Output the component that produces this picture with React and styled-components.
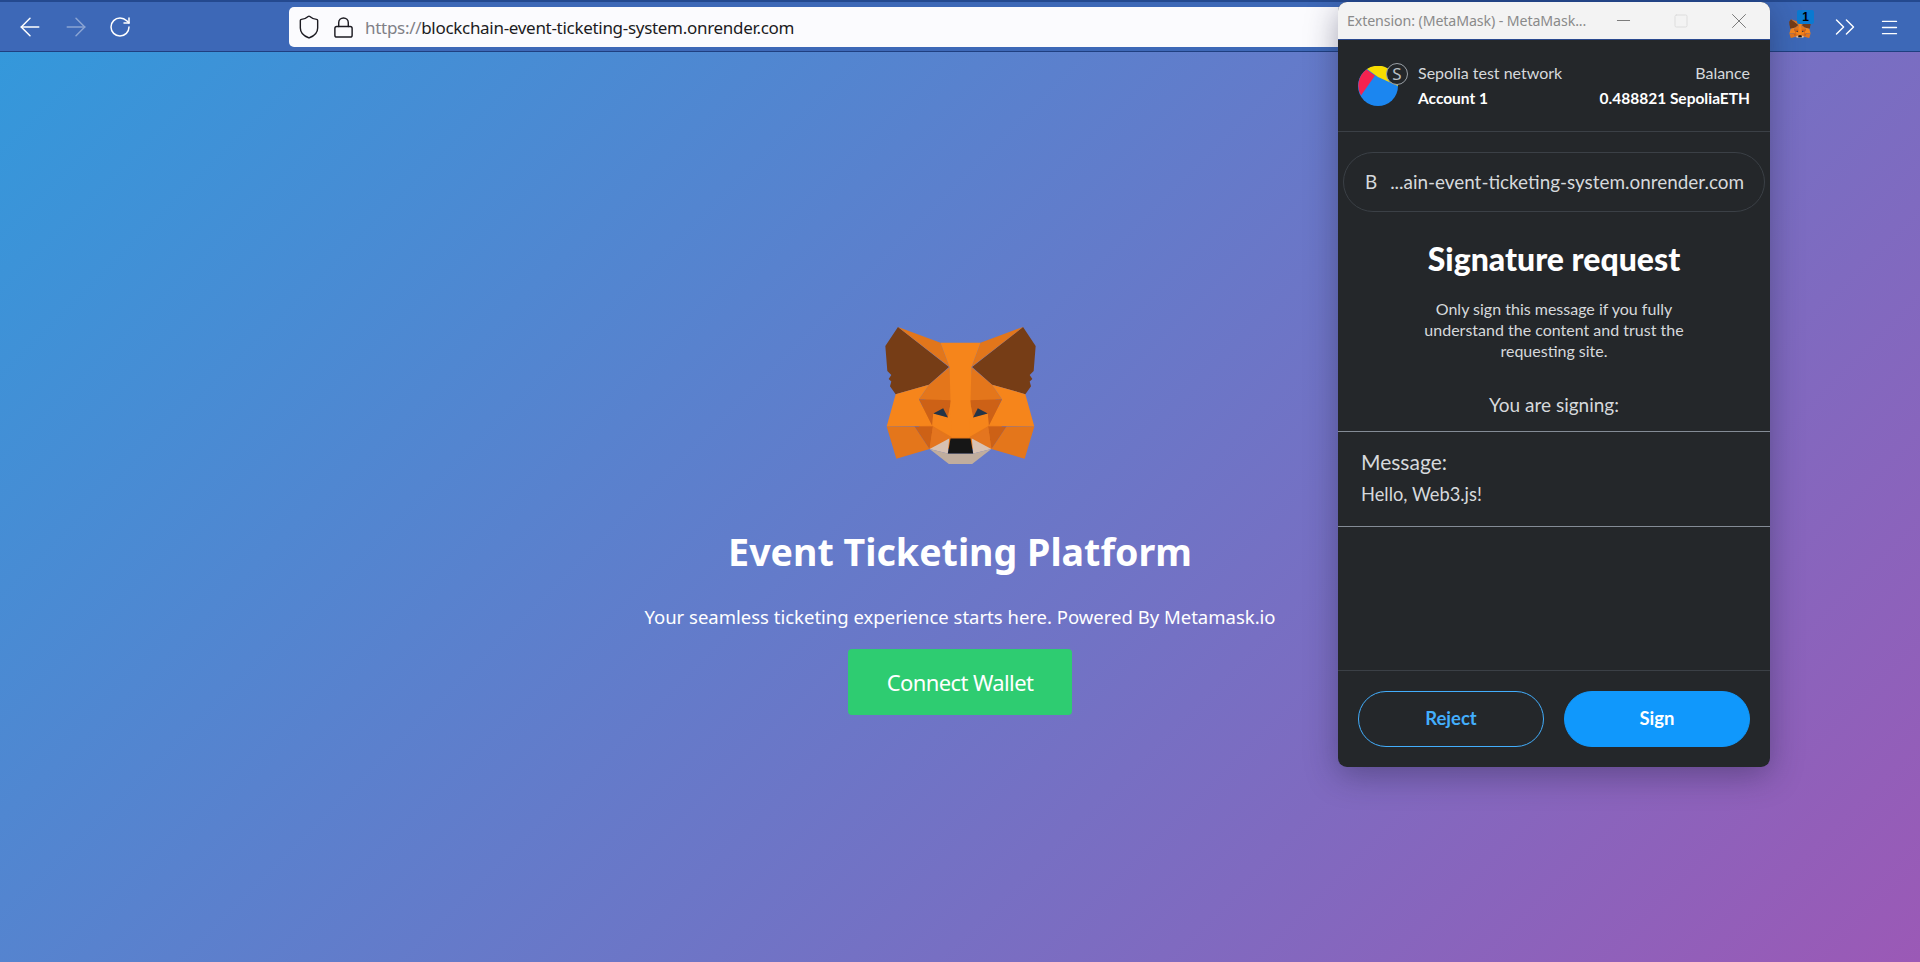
import React from 'react';
import styled, { createGlobalStyle } from 'styled-components';
import { ArrowLeft, ArrowRight, RotateCw, Shield, Lock, ChevronsRight, Menu, Minus, Square, X } from 'lucide-react';

const GlobalStyle = createGlobalStyle`
  html, body { margin: 0; padding: 0; height: 100%; overflow: hidden; }
  #root { height: 100%; }
  * { box-sizing: border-box; }
`;

const Page = styled.div`
  position: relative;
  display: flex;
  flex-direction: column;
  height: 962px;
  font-family: "Noto Sans", "Open Sans", sans-serif;
`;

const Toolbar = styled.header`
  display: flex;
  align-items: center;
  height: 52px;
  flex: none;
  padding: 1px 0 0 15px;
  background: #3d68b7;
  border-top: 2px solid #24498f;
  border-bottom: 1px solid #1f3f80;
  color: #fff;
`;

const NavButton = styled.span`
  display: flex;
  justify-content: center;
  width: 30px;
  margin-right: ${p => p.$gap}px;
  opacity: ${p => (p.$faded ? 0.4 : 1)};
`;

const AddressBar = styled.div`
  display: flex;
  align-items: center;
  flex: 1;
  height: 40px;
  margin-right: 100px;
  padding-left: 7px;
  gap: 10px;
  background: #fbfbfe;
  border-radius: 5px;
  color: #1c1b22;
`;

const Url = styled.span`
  font-size: 17px;
  letter-spacing: -0.3px;
  white-space: nowrap;
`;

const UrlScheme = styled.span`
  color: #808087;
`;

const ExtensionIcon = styled.span`
  position: relative;
  display: flex;
  width: 22px;
  margin: 3px 17px 0 0;
`;

const Badge = styled.span`
  position: absolute;
  top: -9px;
  left: 8px;
  width: 17px;
  height: 14px;
  border-radius: 2px;
  background: #0a7ad1;
  color: #000;
  font: 700 12px/14px "Liberation Sans", sans-serif;
  text-align: center;
`;

const ToolIcon = styled.span`
  display: flex;
  margin-right: ${p => p.$gap}px;
`;

const Main = styled.main`
  flex: 1;
  display: flex;
  flex-direction: column;
  align-items: center;
  padding-top: 274px;
  background: linear-gradient(135deg, #3498db, #9b59b6);
  color: #fff;
`;

const Title = styled.h1`
  margin: 61px 0 0;
  font-size: 37.6px;
  line-height: 52px;
  font-weight: 700;
`;

const Tagline = styled.p`
  margin: 26px 0 0;
  font-size: 18.5px;
  line-height: 26px;
`;

const ConnectButton = styled.button`
  width: 224px;
  height: 66px;
  margin-top: 19px;
  border: 0;
  border-radius: 4px;
  background: #2ecc71;
  color: #fff;
  font-family: inherit;
  font-size: 22px;
  letter-spacing: -0.6px;
`;

const Popup = styled.section`
  position: absolute;
  top: 2px;
  left: 1338px;
  display: flex;
  flex-direction: column;
  width: 432px;
  height: 765px;
  border-radius: 9px;
  overflow: hidden;
  background: #24272a;
  color: #d6d9dc;
  font-family: Lato, "Noto Sans", sans-serif;
  box-shadow: 0 8px 32px rgba(30, 30, 60, 0.4);
`;

const TitleBar = styled.div`
  display: flex;
  align-items: center;
  flex: none;
  height: 38px;
  padding-left: 9px;
  background: #f3f3f3;
  border-bottom: 1px solid #2b4a8f;
  color: #8a8a8a;
  font-family: "Noto Sans", sans-serif;
  font-size: 14.2px;
`;

const TitleText = styled.span`
  width: 247px;
  letter-spacing: -0.1px;
  white-space: nowrap;
`;

const WinControl = styled.span`
  display: flex;
  justify-content: center;
  width: 58px;
  color: ${p => p.$color};
`;

const AccountRow = styled.div`
  display: flex;
  align-items: center;
  flex: none;
  height: 92px;
  padding: 0 20px;
  border-bottom: 1px solid #3b4046;
  font-size: 16px;
`;

const AvatarWrap = styled.div`
  position: relative;
  width: 40px;
  height: 40px;
  margin-right: 20px;
`;

const NetworkBadge = styled.span`
  position: absolute;
  top: -3px;
  left: 28px;
  width: 22px;
  height: 22px;
  border: 1px solid #9aa0a6;
  border-radius: 50%;
  background: #24272a;
  color: #bbc0c5;
  font: 400 17px/20px "Noto Sans", sans-serif;
  text-align: center;
`;

const AccountCol = styled.div`
  display: flex;
  flex-direction: column;
  gap: 7px;
  line-height: 19px;
  margin-top: -1px;
  margin-left: ${p => (p.$right ? 'auto' : 0)};
  text-align: ${p => (p.$right ? 'right' : 'left')};
`;

const Strong = styled.span`
  color: #fff;
  font-size: 15.5px;
  font-weight: 700;
`;

const OriginPill = styled.div`
  display: flex;
  align-items: center;
  flex: none;
  height: 60px;
  margin: 20px 5px 0;
  padding: 0 20px 2px 21px;
  border: 1px solid #3b4046;
  border-radius: 30px;
  font-size: 18.9px;
  white-space: nowrap;
`;

const OriginText = styled.span`
  margin-left: auto;
`;

const Heading = styled.h2`
  margin: 27px 0 0;
  color: #fff;
  font-size: 32px;
  line-height: 40px;
  font-weight: 900;
  text-align: center;
`;

const Description = styled.p`
  margin: 19px auto 0;
  width: 280px;
  font-size: 16px;
  line-height: 21px;
  text-align: center;
`;

const SigningLabel = styled.div`
  flex: none;
  height: 38px;
  margin-top: 32px;
  font-size: 19px;
  line-height: 24px;
  text-align: center;
`;

const MessageBox = styled.div`
  flex: none;
  height: 96px;
  padding: 16px 23px 0;
  border-top: 1px solid #848c96;
  border-bottom: 1px solid #848c96;
`;

const MessageLabel = styled.div`
  font-size: 21px;
  line-height: 28px;
`;

const MessageBody = styled.div`
  margin-top: 4px;
  font-size: 18.3px;
  line-height: 28px;
`;

const Footer = styled.div`
  display: flex;
  gap: 20px;
  flex: none;
  margin-top: auto;
  height: 97px;
  padding: 20px 20px 0;
  border-top: 1px solid #3b4046;
`;

const PillButton = styled.button`
  flex: 1;
  height: 56px;
  padding-bottom: 3px;
  border: 1px solid ${p => (p.$primary ? '#1098fc' : '#43aefc')};
  border-radius: 28px;
  background: ${p => (p.$primary ? '#1098fc' : 'transparent')};
  color: ${p => (p.$primary ? '#fff' : '#43aefc')};
  font-family: inherit;
  font-size: 18.5px;
  font-weight: 700;
`;

const half = [
  ['#763d16', '112,48 74,105 80,180 92,192 84,204 92,212 88,226 105,250 205,222 265,168'],
  ['#e2761b', '112,48 240,95 267,168'],
  ['#e4761b', '267,168 205,222 175,265 272,268'],
  ['#f6851b', '105,250 205,222 175,265 215,345 78,347'],
  ['#cd6116', '175,265 272,268 262,320 218,308 215,345'],
  ['#f6851b', '215,345 218,308 262,320 272,268 276,380'],
  ['#233447', '218,308 248,292 262,320'],
  ['#e4761b', '78,347 162,347 207,415 107,444'],
  ['#cd6116', '162,347 217,347 207,415'],
  ['#e4751f', '217,347 266,383 207,415'],
  ['#d7c1b3', '207,415 266,383 262,428'],
];

const Fox = ({ width }) => (
  <svg width={width} viewBox="70 45 460 418" aria-hidden="true">
    <polygon fill="#e4761b" points="205,222 395,222 425,345 393,415 207,415 175,345" />
    <g>{half.map(([fill, pts]) => <polygon key={pts} fill={fill} points={pts} />)}</g>
    <g transform="translate(600 0) scale(-1 1)">
      {half.map(([fill, pts]) => <polygon key={pts} fill={fill} points={pts} />)}
    </g>
    <polygon fill="#f6851b" points="240,95 360,95 333,168 327,380 273,380 267,168" />
    <polygon fill="#c0ad9e" points="207,415 262,428 338,428 393,415 335,460 265,460" />
    <polygon fill="#161616" points="270,383 330,383 338,428 262,428" />
  </svg>
);

const Avatar = () => (
  <svg width="40" height="40" viewBox="0 0 40 40" aria-hidden="true">
    <circle cx="20" cy="20" r="20" fill="#1b86f0" />
    <path d="M9 3 A20 20 0 0 1 38.8 13 L40 20 L20 11 Z" fill="#f8dc00" />
    <path d="M8.5 3.6 L17 9.6 L3 29.5 A20 20 0 0 1 8.5 3.6 Z" fill="#f5224f" />
  </svg>
);

const App = () => (
  <Page>
    <GlobalStyle />
    <Toolbar>
      <NavButton $gap={16}><ArrowLeft size={30} strokeWidth={1.2} /></NavButton>
      <NavButton $gap={14} $faded><ArrowRight size={30} strokeWidth={1.2} /></NavButton>
      <NavButton $gap={154}><RotateCw size={24} strokeWidth={1.5} /></NavButton>
      <AddressBar>
        <Shield size={26} strokeWidth={1.3} />
        <Lock size={23} strokeWidth={1.5} />
        <Url><UrlScheme>https://</UrlScheme>blockchain-event-ticketing-system.onrender.com</Url>
      </AddressBar>
      <ExtensionIcon>
        <Fox width={22} />
        <Badge>1</Badge>
      </ExtensionIcon>
      <ToolIcon $gap={17}><ChevronsRight size={34} strokeWidth={1} /></ToolIcon>
      <ToolIcon $gap={20}><Menu size={21} strokeWidth={1.5} /></ToolIcon>
    </Toolbar>
    <Main>
      <Fox width={153} />
      <Title>Event Ticketing Platform</Title>
      <Tagline>Your seamless ticketing experience starts here. Powered By Metamask.io</Tagline>
      <ConnectButton>Connect Wallet</ConnectButton>
    </Main>
    <Popup>
      <TitleBar>
        <TitleText>Extension: (MetaMask) - MetaMask...</TitleText>
        <WinControl $color="#777"><Minus size={21} strokeWidth={1.1} /></WinControl>
        <WinControl $color="#ddd"><Square size={16} strokeWidth={1.5} /></WinControl>
        <WinControl $color="#777"><X size={26} strokeWidth={0.9} /></WinControl>
      </TitleBar>
      <AccountRow>
        <AvatarWrap>
          <Avatar />
          <NetworkBadge>S</NetworkBadge>
        </AvatarWrap>
        <AccountCol>
          <span>Sepolia test network</span>
          <Strong>Account 1</Strong>
        </AccountCol>
        <AccountCol $right>
          <span>Balance</span>
          <Strong>0.488821 SepoliaETH</Strong>
        </AccountCol>
      </AccountRow>
      <OriginPill>
        <span>B</span>
        <OriginText>...ain-event-ticketing-system.onrender.com</OriginText>
      </OriginPill>
      <Heading>Signature request</Heading>
      <Description>Only sign this message if you fully understand the content and trust the requesting site.</Description>
      <SigningLabel>You are signing:</SigningLabel>
      <MessageBox>
        <MessageLabel>Message:</MessageLabel>
        <MessageBody>Hello, Web3.js!</MessageBody>
      </MessageBox>
      <Footer>
        <PillButton>Reject</PillButton>
        <PillButton $primary>Sign</PillButton>
      </Footer>
    </Popup>
  </Page>
);

export default App;
